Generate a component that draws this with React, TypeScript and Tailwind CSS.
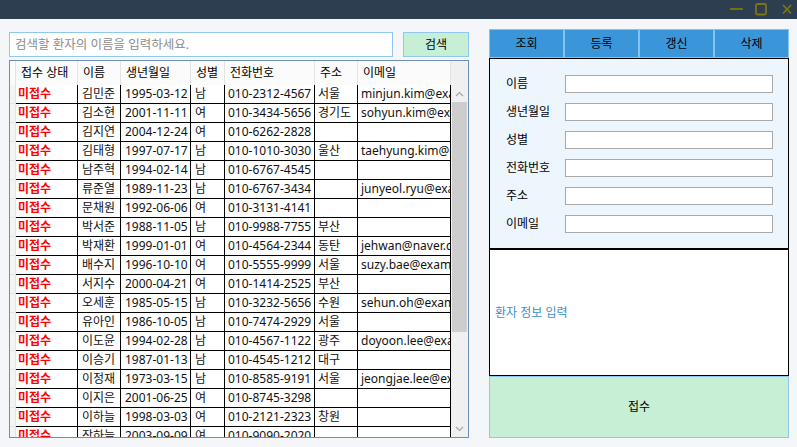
const rows: string[][] = [
  ["김민준", "1995-03-12", "남", "010-2312-4567", "서울", "minjun.kim@example.com"],
  ["김소현", "2001-11-11", "여", "010-3434-5656", "경기도", "sohyun.kim@example.com"],
  ["김지연", "2004-12-24", "여", "010-6262-2828", "", ""],
  ["김태형", "1997-07-17", "남", "010-1010-3030", "울산", "taehyung.kim@example.com"],
  ["남주혁", "1994-02-14", "남", "010-6767-4545", "", ""],
  ["류준열", "1989-11-23", "남", "010-6767-3434", "", "junyeol.ryu@example.com"],
  ["문채원", "1992-06-06", "여", "010-3131-4141", "", ""],
  ["박서준", "1988-11-05", "남", "010-9988-7755", "부산", ""],
  ["박재환", "1999-01-01", "여", "010-4564-2344", "동탄", "jehwan@naver.com"],
  ["배수지", "1996-10-10", "여", "010-5555-9999", "서울", "suzy.bae@example.com"],
  ["서지수", "2000-04-21", "여", "010-1414-2525", "부산", ""],
  ["오세훈", "1985-05-15", "남", "010-3232-5656", "수원", "sehun.oh@example.com"],
  ["유아인", "1986-10-05", "남", "010-7474-2929", "서울", ""],
  ["이도윤", "1994-02-28", "남", "010-4567-1122", "광주", "doyoon.lee@example.com"],
  ["이승기", "1987-01-13", "남", "010-4545-1212", "대구", ""],
  ["이정재", "1973-03-15", "남", "010-8585-9191", "서울", "jeongjae.lee@example.com"],
  ["이지은", "2001-06-25", "여", "010-8745-3298", "", ""],
  ["이하늘", "1998-03-03", "여", "010-2121-2323", "창원", ""],
  ["장하늘", "2003-09-09", "여", "010-9090-2020", "", ""],
];

const fields = ["이름", "생년월일", "성별", "전화번호", "주소", "이메일"];
const tabs = ["조회", "등록", "갱신", "삭제"];

function Chevron({ up }: { up?: boolean }) {
  return (
    <svg width="9" height="6" viewBox="0 0 9 6">
      <polyline
        points={up ? "1,5 4.5,1.5 8,5" : "1,1 4.5,4.5 8,1"}
        fill="none"
        stroke="#a6a6a6"
        strokeWidth="1.2"
      />
    </svg>
  );
}

export default function App() {
  return (
    <div className="w-[797px] h-[447px] overflow-hidden bg-[#f4f6fa] flex flex-col font-['Noto_Sans','Noto_Sans_CJK_KR',sans-serif] text-[12px] text-[#111]">
      {/* title bar */}
      <div className="h-[19px] shrink-0 bg-[#2c3e50] flex justify-end items-center pr-[3px]">
        <svg width="66" height="19" viewBox="0 0 66 19">
          <g fill="none" stroke="#7d7414" strokeWidth="1.8">
            <line x1="2" y1="9" x2="15" y2="9" />
            <rect x="28" y="4" width="10" height="10.5" rx="1.5" />
            <line x1="55" y1="5" x2="63" y2="13.5" />
            <line x1="63" y1="5" x2="55" y2="13.5" />
          </g>
        </svg>
      </div>

      <div className="flex pl-[9px]">
        {/* left column */}
        <div className="w-[460px] mt-[13px] flex flex-col">
          <div className="flex h-[25px] gap-[10px]">
            <div className="w-[384px] border border-[#8fc8ea] bg-white flex items-center pl-[5px] text-[12.5px] leading-[23px] text-[#8c8c8c] whitespace-nowrap">
              검색할 환자의 이름을 입력하세요.
            </div>
            <button className="w-[66px] border border-[#8fc8ea] bg-[#c6efd6] text-[12px] leading-[23px] text-black">
              검색
            </button>
          </div>

          <div className="mt-[3px] h-[378px] border border-[#6d8fb3] bg-white flex">
            <div className="w-[441px] flex flex-col overflow-hidden">
              {/* header */}
              <div className="h-[24px] shrink-0 flex bg-[#fbfbfb] text-[12px] leading-[24px] text-black">
                <div className="w-[6px] border-r border-[#e3e3e3]" />
                {[
                  ["접수 상태", "w-[62px]"],
                  ["이름", "w-[43px]"],
                  ["생년월일", "w-[70px]"],
                  ["성별", "w-[34px]"],
                  ["전화번호", "w-[90px]"],
                  ["주소", "w-[43px]"],
                  ["이메일", "w-[93px]"],
                ].map(([t, w]) => (
                  <div key={t} className={`${w} border-r border-[#e3e3e3] pl-[5px] whitespace-nowrap overflow-hidden`}>
                    {t}
                  </div>
                ))}
              </div>
              {/* body */}
              {rows.map((r) => (
                <div key={r[0]} className="h-[19px] shrink-0 flex leading-[18px]">
                  <div className="w-[6px] bg-[#f4f4f4] border-r border-b border-[#e3e3e3]" />
                  <div className="w-[62px] border-r border-b border-black pl-[2px] font-bold text-[#ff0000]">미접수</div>
                  <div className="w-[43px] border-r border-b border-black pl-[4px] whitespace-nowrap overflow-hidden">{r[0]}</div>
                  <div className="w-[70px] border-r border-b border-black pl-[4px] whitespace-nowrap overflow-hidden">{r[1]}</div>
                  <div className="w-[34px] border-r border-b border-black pl-[4px]">{r[2]}</div>
                  <div className="w-[90px] border-r border-b border-black pl-[3px] whitespace-nowrap overflow-hidden">{r[3]}</div>
                  <div className="w-[43px] border-r border-b border-black pl-[3px] whitespace-nowrap overflow-hidden">{r[4]}</div>
                  <div className="w-[93px] border-r border-b border-black pl-[3px] whitespace-nowrap overflow-hidden">{r[5]}</div>
                </div>
              ))}
            </div>
            {/* scrollbar */}
            <div className="w-[17px] bg-[#f0f0f0] flex flex-col">
              <div className="h-[24px]" />
              <div className="h-[17px] flex items-center justify-center">
                <Chevron up />
              </div>
              <div className="h-[230px] mx-[1px] bg-[#cdcdcd]" />
              <div className="flex-1" />
              <div className="h-[17px] flex items-center justify-center">
                <Chevron />
              </div>
            </div>
          </div>
        </div>

        {/* right column */}
        <div className="ml-[20px] w-[300px] mt-[10px] flex flex-col">
          <div className="h-[29px] flex">
            {tabs.map((t) => (
              <div key={t} className="flex-1 border border-[#82c4ef] bg-[#3a95d9] flex items-center justify-center leading-[27px] text-black">
                {t}
              </div>
            ))}
          </div>
          <div className="h-[191px] border border-black bg-[#eef6fd] pt-[16px] pl-[16px] pr-[15px] flex flex-col gap-[10px]">
            {fields.map((f) => (
              <div key={f} className="h-[18px] flex items-center leading-[18px]">
                <div className="w-[59px] text-black whitespace-nowrap">{f}</div>
                <div className="flex-1 h-[18px] bg-white border border-[#a9a9a9]" />
              </div>
            ))}
          </div>
          <div className="h-[127px] border border-black bg-white flex items-center pl-[5px] leading-[18px] text-[#3a8fd0]">
            환자 정보 입력
          </div>
          <button className="h-[62px] border border-[#8fc8ea] bg-[#c6efd6] leading-[18px] text-black">
            접수
          </button>
        </div>
      </div>
    </div>
  );
}
